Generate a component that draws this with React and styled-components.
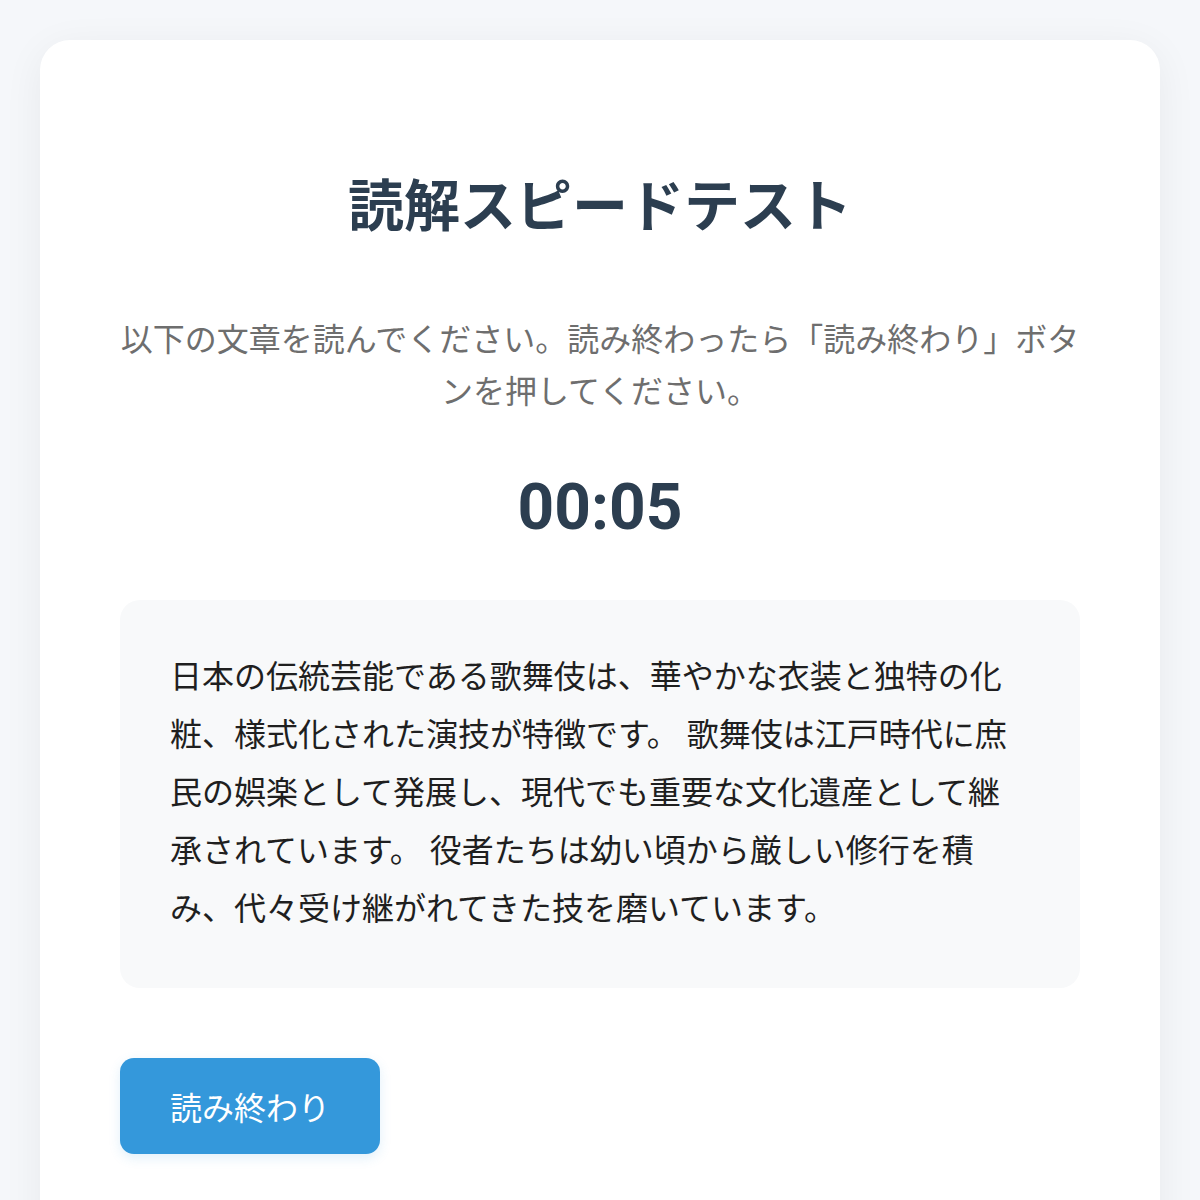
import React, { useState } from 'react';
import styled, { createGlobalStyle } from 'styled-components';

const GlobalStyle = createGlobalStyle`
  html, body {
    margin: 0;
    padding: 0;
    background: #f5f7fa;
    font-family: Roboto, "Noto Sans CJK JP", sans-serif;
  }
`;

const Page = styled.div`
  padding: 40px 40px 0;
`;

const Card = styled.div`
  background: #ffffff;
  border-radius: 30px;
  box-shadow: 0 8px 40px rgba(0, 0, 0, 0.06);
  padding: 80px 80px 120px;
  display: flex;
  flex-direction: column;
`;

const Title = styled.h1`
  margin: 53px 0 0;
  font-size: 56px;
  line-height: 68px;
  font-weight: 700;
  color: #2c3e50;
  text-align: center;
`;

const Instruction = styled.p`
  margin: 73px 0 0;
  font-size: 32px;
  line-height: 52px;
  color: #6e6e6e;
  text-align: center;
`;

const Timer = styled.div`
  margin-top: 52px;
  font-size: 64px;
  line-height: 76px;
  font-weight: 700;
  color: #2c3e50;
  text-align: center;
`;

const Passage = styled.div`
  margin-top: 54px;
  background: #f8f9fa;
  border-radius: 20px;
  padding: 48px 50px 50px;
  font-size: 32px;
  line-height: 58px;
  color: #1f1f1f;
`;

const FinishButton = styled.button`
  margin-top: 70px;
  align-self: flex-start;
  height: 96px;
  padding: 0 50px;
  border: none;
  border-radius: 14px;
  background: #3498db;
  color: #ffffff;
  font-family: inherit;
  font-size: 32px;
  cursor: pointer;
  box-shadow: 0 4px 12px rgba(52, 152, 219, 0.15);
`;

const passage =
  '日本の伝統芸能である歌舞伎は、華やかな衣装と独特の化粧、様式化された演技が特徴です。 歌舞伎は江戸時代に庶民の娯楽として発展し、現代でも重要な文化遺産として継承されています。 役者たちは幼い頃から厳しい修行を積み、代々受け継がれてきた技を磨いています。';

const App = () => {
  const [seconds] = useState(5);
  const mm = String(Math.floor(seconds / 60)).padStart(2, '0');
  const ss = String(seconds % 60).padStart(2, '0');

  return (
    <>
      <GlobalStyle />
      <Page>
        <Card>
          <Title>読解スピードテスト</Title>
          <Instruction>
            以下の文章を読んでください。読み終わったら「読み終わり」ボタンを押してください。
          </Instruction>
          <Timer>{mm}:{ss}</Timer>
          <Passage>{passage}</Passage>
          <FinishButton>読み終わり</FinishButton>
        </Card>
      </Page>
    </>
  );
};

export default App;
